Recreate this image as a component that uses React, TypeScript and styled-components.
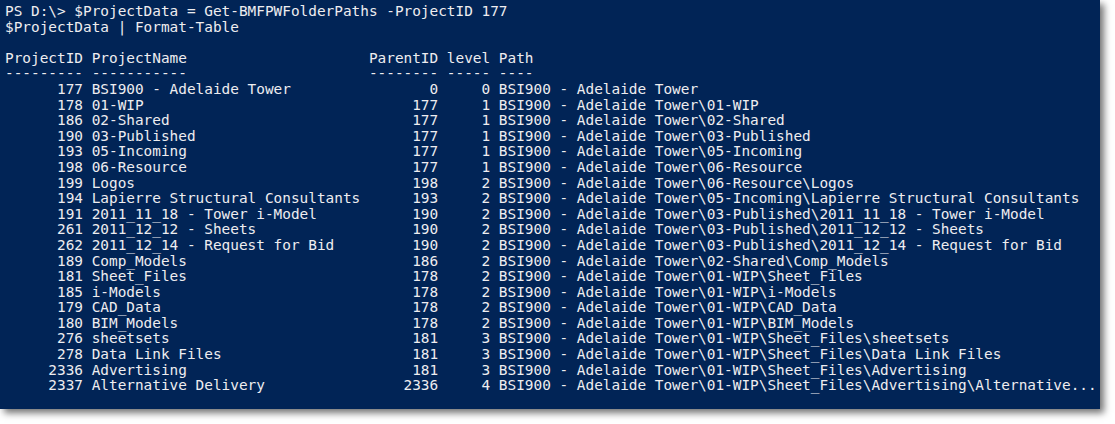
import React from "react";
import styled, { createGlobalStyle } from "styled-components";

const GlobalStyle = createGlobalStyle`
  html, body {
    margin: 0;
    padding: 0;
    background: #ffffff;
  }
`;

const Page = styled.div`
  width: 1115px;
  height: 424px;
  background: #ffffff;
`;

const Console = styled.div`
  box-sizing: border-box;
  width: 1100px;
  height: 409px;
  padding: 4px 0 0 5px;
  background: #012456;
  color: #eeedf0;
  font-family: "DejaVu Sans Mono", "Liberation Mono", monospace;
  font-size: 14.4px;
  line-height: 15.6px;
  box-shadow: 4px 4px 7px rgba(0, 0, 0, 0.55);
  overflow: hidden;
`;

const Line = styled.div`
  white-space: pre;
  height: 15.6px;
`;

type Row = {
  id: number;
  name: string;
  parent: number;
  level: number;
  path: string;
};

const ROOT = "BSI900 - Adelaide Tower";

const rows: Row[] = [
  { id: 177, name: ROOT, parent: 0, level: 0, path: ROOT },
  { id: 178, name: "01-WIP", parent: 177, level: 1, path: ROOT + "\\01-WIP" },
  { id: 186, name: "02-Shared", parent: 177, level: 1, path: ROOT + "\\02-Shared" },
  { id: 190, name: "03-Published", parent: 177, level: 1, path: ROOT + "\\03-Published" },
  { id: 193, name: "05-Incoming", parent: 177, level: 1, path: ROOT + "\\05-Incoming" },
  { id: 198, name: "06-Resource", parent: 177, level: 1, path: ROOT + "\\06-Resource" },
  { id: 199, name: "Logos", parent: 198, level: 2, path: ROOT + "\\06-Resource\\Logos" },
  {
    id: 194,
    name: "Lapierre Structural Consultants",
    parent: 193,
    level: 2,
    path: ROOT + "\\05-Incoming\\Lapierre Structural Consultants",
  },
  {
    id: 191,
    name: "2011_11_18 - Tower i-Model",
    parent: 190,
    level: 2,
    path: ROOT + "\\03-Published\\2011_11_18 - Tower i-Model",
  },
  {
    id: 261,
    name: "2011_12_12 - Sheets",
    parent: 190,
    level: 2,
    path: ROOT + "\\03-Published\\2011_12_12 - Sheets",
  },
  {
    id: 262,
    name: "2011_12_14 - Request for Bid",
    parent: 190,
    level: 2,
    path: ROOT + "\\03-Published\\2011_12_14 - Request for Bid",
  },
  { id: 189, name: "Comp_Models", parent: 186, level: 2, path: ROOT + "\\02-Shared\\Comp_Models" },
  { id: 181, name: "Sheet_Files", parent: 178, level: 2, path: ROOT + "\\01-WIP\\Sheet_Files" },
  { id: 185, name: "i-Models", parent: 178, level: 2, path: ROOT + "\\01-WIP\\i-Models" },
  { id: 179, name: "CAD_Data", parent: 178, level: 2, path: ROOT + "\\01-WIP\\CAD_Data" },
  { id: 180, name: "BIM_Models", parent: 178, level: 2, path: ROOT + "\\01-WIP\\BIM_Models" },
  { id: 276, name: "sheetsets", parent: 181, level: 3, path: ROOT + "\\01-WIP\\Sheet_Files\\sheetsets" },
  {
    id: 278,
    name: "Data Link Files",
    parent: 181,
    level: 3,
    path: ROOT + "\\01-WIP\\Sheet_Files\\Data Link Files",
  },
  {
    id: 2336,
    name: "Advertising",
    parent: 181,
    level: 3,
    path: ROOT + "\\01-WIP\\Sheet_Files\\Advertising",
  },
  {
    id: 2337,
    name: "Alternative Delivery",
    parent: 2336,
    level: 4,
    path: ROOT + "\\01-WIP\\Sheet_Files\\Advertising\\Alternative...",
  },
];

const W_ID = 9;
const W_NAME = 31;
const W_PARENT = 8;
const W_LEVEL = 5;

const fmt = (id: string, name: string, parent: string, level: string, path: string) =>
  id.padStart(W_ID) +
  " " +
  name.padEnd(W_NAME) +
  " " +
  parent.padStart(W_PARENT) +
  " " +
  level.padStart(W_LEVEL) +
  " " +
  path;

const header =
  "ProjectID".padEnd(W_ID) +
  " " +
  "ProjectName".padEnd(W_NAME) +
  " " +
  "ParentID".padEnd(W_PARENT) +
  " " +
  "level".padEnd(W_LEVEL) +
  " " +
  "Path";

const dashes =
  "-".repeat(9) +
  " " +
  "-".repeat(11).padEnd(W_NAME) +
  " " +
  "-".repeat(8) +
  " " +
  "-".repeat(5) +
  " " +
  "-".repeat(4);

export default function App() {
  const lines: string[] = [
    "PS D:\\> $ProjectData = Get-BMFPWFolderPaths -ProjectID 177",
    "$ProjectData | Format-Table",
    "",
    header,
    dashes,
    ...rows.map((r) =>
      fmt(String(r.id), r.name, String(r.parent), String(r.level), r.path)
    ),
  ];
  return (
    <Page>
      <GlobalStyle />
      <Console>
        {lines.map((l, i) => (
          <Line key={i}>{l}</Line>
        ))}
      </Console>
    </Page>
  );
}
